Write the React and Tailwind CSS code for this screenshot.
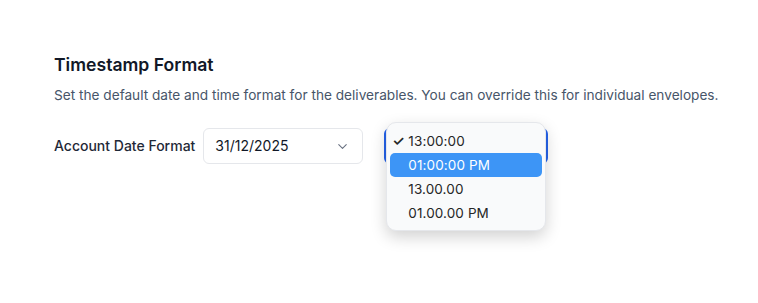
import React from "react";
import { ChevronDown } from "lucide-react";

const timeOptions = ["13:00:00", "01:00:00 PM", "13.00.00", "01.00.00 PM"];

function TimeMenu({ selected = 0, highlighted = 1 }) {
  return (
    <div className="absolute left-[2px] top-[-6px] z-10 w-[160px] rounded-[10px] border border-gray-200 bg-[#f9fafb] pt-[6px] pb-[5px] px-[3px] shadow-[0_6px_16px_rgba(0,0,0,0.18)]">
      {timeOptions.map((opt, i) => (
        <div
          key={opt}
          className={[
            "relative flex h-6 items-center rounded-[5px] pl-[18px] text-[13.5px] tracking-[0.1px]",
            i === highlighted ? "bg-[#3d95f6] text-white" : "text-[#262626]",
          ].join(" ")}
        >
          {i === selected ? (
            <span className="absolute left-[2px] top-[3px] text-[14px] font-semibold leading-[18px]">✓</span>
          ) : null}
          {opt}
        </div>
      ))}
    </div>
  );
}

export default function App() {
  return (
    <div className="min-h-screen w-full bg-white pl-[54px] pt-[51px] font-['Inter','Noto_Sans',sans-serif]">
      <h2 className="text-[17.6px] font-semibold leading-7 text-[#111827]">Timestamp Format</h2>
      <p className="mt-1.5 text-[13.65px] leading-5 text-[#475569]">
        Set the default date and time format for the deliverables. You can override this for individual envelopes.
      </p>

      <div className="mt-[23px] flex items-center">
        <span className="text-sm font-medium text-[#1f2937]">Account Date Format</span>
        <div className="ml-[8px] flex h-9 w-[160px] items-center justify-between rounded-md border border-gray-200 pl-[11px] pr-[12px]">
          <span className="text-sm text-[#111827]">31/12/2025</span>
          <ChevronDown size={15} strokeWidth={1.75} className="text-gray-500" />
        </div>

        <div className="relative ml-[21px] h-9 w-[164px]">
          <div className="h-full w-full rounded-md border-2 border-[#2563eb]" />
          <TimeMenu />
        </div>
      </div>
    </div>
  );
}
